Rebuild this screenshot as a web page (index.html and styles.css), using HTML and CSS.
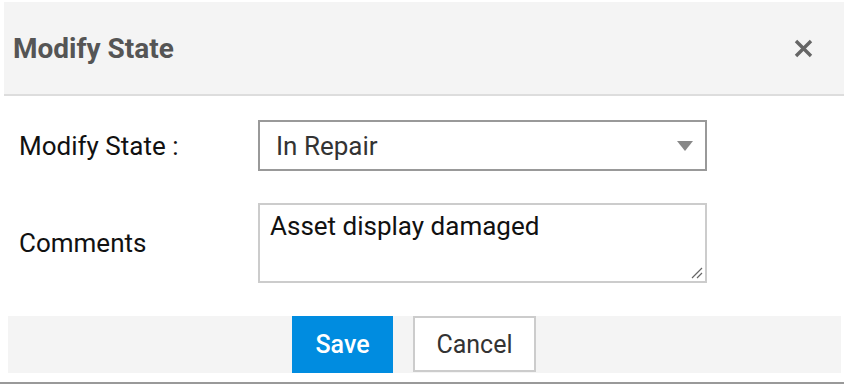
FILE: index.html
```html
<!DOCTYPE html>
<html lang="en">
<head>
<meta charset="UTF-8" />
<title>Modify State</title>
<link rel="stylesheet" href="styles.css">
</head>
<body>

<div class="dialog">
  <div class="dialog-head">
    <h2 class="dialog-title">Modify State</h2>
    <button class="close-btn" aria-label="Close">
      <svg width="19" height="19" viewBox="0 0 19 19"><path d="M2 2 L17 17 M17 2 L2 17" stroke="#666" stroke-width="3.4" stroke-linecap="butt"/></svg>
    </button>
  </div>

  <div class="dialog-body">
    <div class="form-row">
      <label class="form-label">Modify State :</label>
      <div class="select-box">
        <span>In Repair</span>
        <span class="caret"></span>
      </div>
    </div>
    <div class="form-row row-comments">
      <label class="form-label">Comments</label>
      <div class="text-box">
        <span>Asset display damaged</span>
        <svg class="grip" width="12" height="12" viewBox="0 0 12 12"><path d="M11 1 L1 11 M11 6 L6 11" stroke="#666" stroke-width="1.2"/></svg>
      </div>
    </div>
  </div>

  <div class="dialog-foot">
    <button class="btn btn-save">Save</button>
    <button class="btn btn-cancel">Cancel</button>
  </div>
</div>

</body>
</html>
```

FILE: styles.css
```css
/*―― base ――*/
html, body      { margin: 0; padding: 0; background: #fff; }
body            { font-family: Roboto, "Liberation Sans", sans-serif; color: #111; width: 844px; height: 384px; overflow: hidden; }

.dialog         { height: 380px; padding-top: 2px; border-bottom: 2px solid #999; position: relative; }

/*―― header ――*/
.dialog-head {
  margin-left: 4px;
  height: 92px;
  background: #f4f4f4;
  border-bottom: 2px solid #ddd;
  display: flex; align-items: center; justify-content: space-between;
  padding: 0 31px 0 9px;
}
.dialog-title   { margin: 0; font-size: 28px; font-weight: 700; color: #555; }
.close-btn      { border: none; background: none; padding: 0; width: 19px; height: 19px; display: flex; }

/*―― form ――*/
.dialog-body    { padding: 24px 0 0 19px; }
.form-row       { display: flex; align-items: center; }
.row-comments   { margin-top: 32px; }
.form-label     { width: 239px; font-size: 26px; color: #111; }

.select-box {
  width: 449px; height: 51px; box-sizing: border-box;
  border: 2px solid #999;
  display: flex; align-items: center; justify-content: space-between;
  padding: 0 12px 0 16px;
  font-size: 26px; color: #333;
}
.caret          { width: 0; height: 0; border-left: 8px solid transparent; border-right: 8px solid transparent; border-top: 10px solid #888; }

.text-box {
  width: 449px; height: 80px; box-sizing: border-box;
  border: 2px solid #ccc;
  position: relative;
  padding: 6px 10px;
  font-size: 26px; color: #111;
}
.grip           { position: absolute; right: 2px; bottom: 2px; }

/*―― footer ――*/
.dialog-foot {
  margin: 33px 3px 0 8px;
  height: 57px;
  background: #f4f4f4;
  display: flex; align-items: stretch; gap: 20px;
  padding-left: 284px;
}
.btn            { font-family: inherit; font-size: 25px; margin: 0; cursor: pointer; }
.btn-save       { width: 101px; border: none; background: #008ce0; color: #fff; font-weight: 500; }
.btn-cancel     { width: 123px; height: 56px; border: 2px solid #ccc; background: #fff; color: #333; }
```
